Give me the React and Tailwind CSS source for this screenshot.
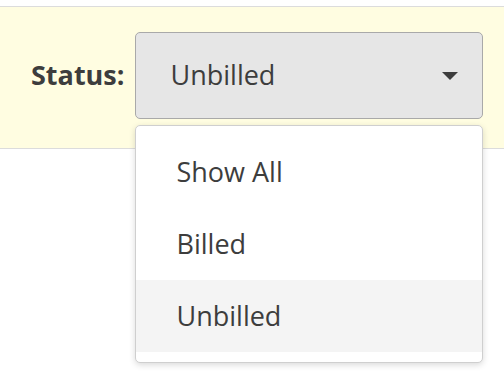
import React from 'react';

const OPTIONS = ['Show All', 'Billed', 'Unbilled'];

export default function App() {
  const selected = 'Unbilled';

  return (
    <div
      className="w-[504px] h-[388px] bg-white pt-[6px] text-[#3a3a3a]"
      style={{ fontFamily: '"Open Sans", "Liberation Sans", sans-serif' }}
    >
      <div className="border-t border-b border-[#dcdcdc] bg-[#fffde1] pt-[25px] pb-[29px]">
        <div className="flex items-center pl-[31px]">
          <label className="text-[27px] font-bold text-[#3d3d3d] mr-[10px]">Status:</label>
          <div className="relative">
            <button className="flex items-center justify-between w-[348px] h-[87px] rounded-[5px] border border-[#a9a9a9] bg-[#e6e6e6] pl-[35px] pr-[24px] text-[27px] text-[#3d3d3d]">
              <span>{selected}</span>
              <svg width="16" height="8" viewBox="0 0 16 8">
                <path d="M0 0 H16 L8 8 Z" fill="#3d3d3d" />
              </svg>
            </button>
            <ul className="absolute left-0 top-[93px] w-[348px] rounded-[5px] border border-[#cfcfcf] bg-white py-[10px] shadow-[0_2px_6px_rgba(0,0,0,0.15)]">
              {OPTIONS.map((opt) => (
                <li
                  key={opt}
                  className={`h-[72px] flex items-center pl-[41px] text-[27px] text-[#3d3d3d] ${
                    opt === selected ? 'bg-[#f4f4f4]' : ''
                  }`}
                >
                  {opt}
                </li>
              ))}
            </ul>
          </div>
        </div>
      </div>
    </div>
  );
}
